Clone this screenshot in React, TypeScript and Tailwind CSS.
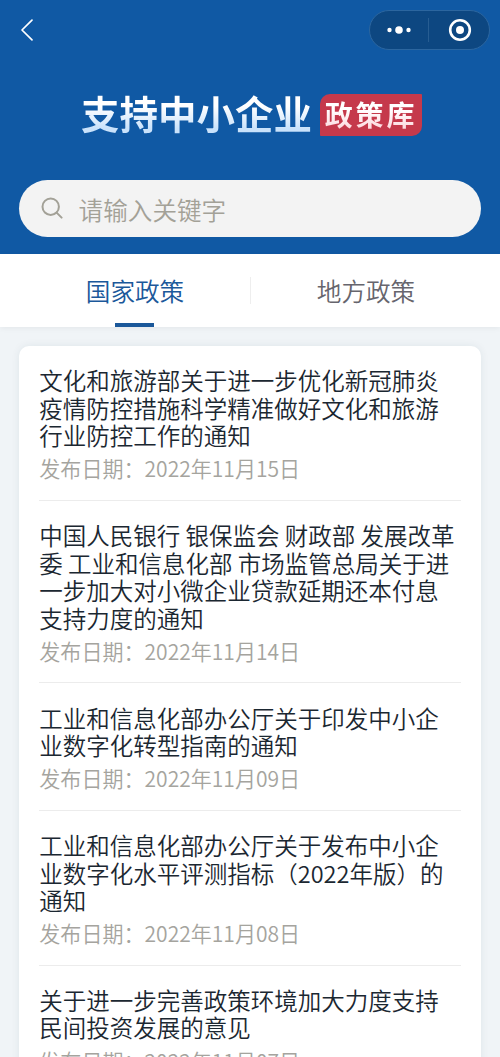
type Policy = { title: string; date: string };

const policies: Policy[] = [
  { title: '文化和旅游部关于进一步优化新冠肺炎疫情防控措施科学精准做好文化和旅游行业防控工作的通知', date: '2022年11月15日' },
  { title: '中国人民银行 银保监会 财政部 发展改革委 工业和信息化部 市场监管总局关于进一步加大对小微企业贷款延期还本付息支持力度的通知', date: '2022年11月14日' },
  { title: '工业和信息化部办公厅关于印发中小企业数字化转型指南的通知', date: '2022年11月09日' },
  { title: '工业和信息化部办公厅关于发布中小企业数字化水平评测指标（2022年版）的通知', date: '2022年11月08日' },
  { title: '关于进一步完善政策环境加大力度支持民间投资发展的意见', date: '2022年11月07日' },
];

function Header() {
  return (
    <header className="h-[254px] shrink-0 bg-[#1059a4]">
      <div className="flex h-[60px] items-center justify-between pl-5 pr-[10px]">
        <svg width="14" height="24" viewBox="0 0 14 24" fill="none" stroke="#fff" strokeWidth="1.7" strokeLinecap="round" strokeLinejoin="round">
          <path d="M12 2.2 2 12l10 9.8" />
        </svg>
        <div className="flex h-10 w-[121px] items-center rounded-full border border-[#2c669f] bg-[#0d4781]">
          <div className="flex flex-1 justify-center">
            <svg width="24" height="10" viewBox="0 0 24 10" fill="#fff">
              <circle cx="2.5" cy="5" r="2.2" />
              <circle cx="12" cy="5" r="3.8" />
              <circle cx="21.5" cy="5" r="2.2" />
            </svg>
          </div>
          <div className="h-6 w-px bg-[#275d92]" />
          <div className="flex flex-1 justify-center pl-[3px]">
            <svg width="24" height="24" viewBox="0 0 24 24">
              <circle cx="12" cy="12" r="9.8" fill="none" stroke="#fff" strokeWidth="2.6" />
              <circle cx="12" cy="12" r="4" fill="#fff" />
            </svg>
          </div>
        </div>
      </div>
      <div className="flex h-[120px] items-center pb-[10px] pl-[81px]">
        <h1 className="mb-[7px] w-[238.5px] bg-linear-to-b from-white from-40% to-[#c9e2fb] to-80% bg-clip-text text-[38.5px] leading-[56px] font-bold whitespace-nowrap text-transparent">
          支持中小企业
        </h1>
        <div className="flex h-[42px] w-[102px] items-center justify-center rounded-tl-[10px] rounded-tr-[1px] rounded-br-[10px] rounded-bl-[1px] bg-[#c5394b]">
          <span className="mb-[3px] bg-linear-to-b from-white from-40% to-[#fddde2] to-80% bg-clip-text pl-px text-[28px] leading-[42px] font-bold tracking-[2.9px] whitespace-nowrap text-transparent">政策库</span>
        </div>
      </div>
      <div className="mx-[19px] flex h-[57px] items-center rounded-full bg-[#f3f3f3] pl-[22px] text-[#a3a197]">
        <svg className="mb-[2px]" width="22" height="22" viewBox="0 0 22 22" fill="none" stroke="currentColor" strokeWidth="2" strokeLinecap="round">
          <circle cx="9.7" cy="9.7" r="8.2" />
          <path d="m15.6 15.6 5 5" />
        </svg>
        <span className="pl-[15.6px] text-[24.6px] leading-9 font-[350]">请输入关键字</span>
      </div>
    </header>
  );
}

function Tabs() {
  return (
    <nav className="flex h-[73px] shrink-0 items-center bg-white text-[24.6px] font-[350] shadow-[0_1px_6px_rgba(0,0,0,0.06)]">
      <div className="flex h-full w-[250px] flex-col items-center pl-[19px] text-[#1b589a]">
        <span className="flex flex-1 items-center pt-0.5 pl-px leading-9">国家政策</span>
        <span className="h-1 w-[39px] bg-[#1b589a]" />
      </div>
      <div className="h-[27px] w-px bg-[#eeeeee]" />
      <div className="flex h-full flex-1 justify-center pr-[19px] pb-1 text-[#66656d]">
        <span className="flex items-center pt-0.5 leading-9">地方政策</span>
      </div>
    </nav>
  );
}

export default function App() {
  return (
    <div className="flex h-[1057px] w-[500px] flex-col overflow-hidden bg-[#f0f4f7] font-['Noto_Sans_CJK_SC',sans-serif]">
      <Header />
      <Tabs />
      <main className="mx-[19px] mt-[19px] shrink-0 rounded-[10px] bg-white px-5 shadow-[0_0_8px_rgba(30,60,80,0.08)]">
        {policies.map((p) => (
          <article key={p.date} className="border-b border-[#ececec] pt-[21.4px] pb-[15.5px] font-[350]">
            <h2 className="pr-1 pl-[0.3px] text-[23.5px] leading-[27.4px] text-[#1b2731]">{p.title}</h2>
            <p className="mt-[2.8px] pl-[0.3px] text-[21.05px] leading-8 text-[#a5a49e]">发布日期：{p.date}</p>
          </article>
        ))}
      </main>
    </div>
  );
}
